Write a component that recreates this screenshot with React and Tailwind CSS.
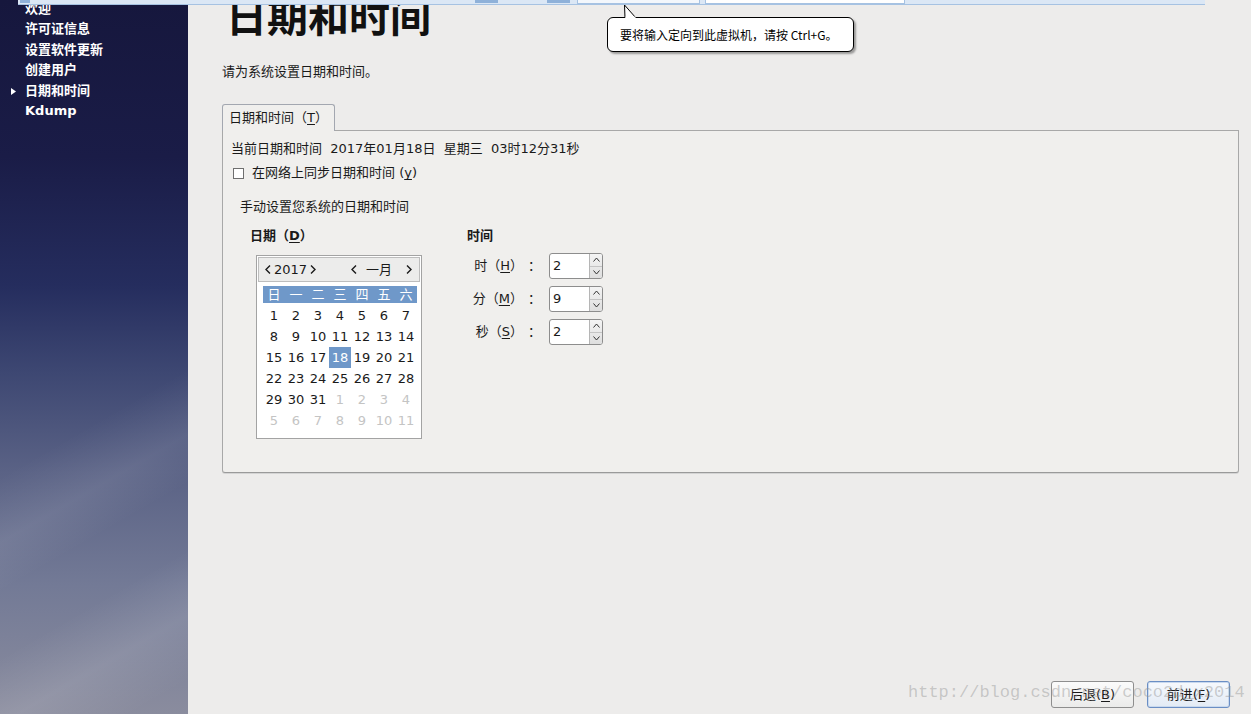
import React from 'react'

const ui = { fontFamily: '"DejaVu Sans","Noto Sans CJK SC",sans-serif' }

const sideItems = ['欢迎', '许可证信息', '设置软件更新', '创建用户', '日期和时间', 'Kdump']

const weekDays = ['日', '一', '二', '三', '四', '五', '六']

const days = [
    ...Array.from({ length: 31 }, (_, i) => ({ n: i + 1, cur: true })),
    ...Array.from({ length: 11 }, (_, i) => ({ n: i + 1, cur: false })),
]

const Chevron = ({ left }) => (
    <svg width='6' height='9' viewBox='0 0 6 9'>
        <path d={left ? 'M5 0.5 L1 4.5 L5 8.5' : 'M1 0.5 L5 4.5 L1 8.5'} fill='none' stroke='#1a1a1a' strokeWidth='1.4' />
    </svg>
)

const Spin = ({ value }) => {
    return (
        <div className='flex h-[26px] w-[54px] rounded-[3px] border border-[#8d8d8d] bg-white overflow-hidden'>
            <div className='flex-1 pl-[3px] text-[13px] leading-[24px] text-[#1a1a1a]'>{value}</div>
            <div className='flex w-[13px] flex-col border-l border-[#b5b5b5] bg-[linear-gradient(#f4f4f4,#dedede)]'>
                <div className='flex flex-1 items-center justify-center border-b border-[#c4c4c4]'>
                    <svg width='7' height='5' viewBox='0 0 7 5'><path d='M0.5 4.5 L3.5 1 L6.5 4.5' fill='none' stroke='#333' strokeWidth='1' /></svg>
                </div>
                <div className='flex flex-1 items-center justify-center'>
                    <svg width='7' height='5' viewBox='0 0 7 5'><path d='M0.5 0.5 L3.5 4 L6.5 0.5' fill='none' stroke='#333' strokeWidth='1' /></svg>
                </div>
            </div>
        </div>
    )
}

const TimeRow = ({ ch, key1, value }) => {
    return (
        <div className='flex h-[26px] items-center'>
            <div className='w-[56px] text-right text-[13px] text-[#1a1a1a]'>
                {ch}（<u className='underline-offset-2'>{key1}</u>）
            </div>
            <div className='w-[26px] pl-[5px] text-[13px] text-[#1a1a1a]'>：</div>
            <Spin value={value} />
        </div>
    )
}

const Calendar = () => {
    return (
        <div className='ml-[6px] mt-[10px] h-[184px] w-[166px] border border-[#a3a3a3] bg-white p-[1px]'>
            <div className='flex h-[25px] items-center border border-[#bdbdbd] bg-[#ececeb] text-[13px] text-[#1a1a1a]'>
                <span className='ml-[6px] flex'><Chevron left /></span>
                <span className='ml-[3px]'>2017</span>
                <span className='ml-[3px] flex'><Chevron /></span>
                <span className='ml-[35px] flex'><Chevron left /></span>
                <span className='ml-[9px]'>一月</span>
                <span className='ml-[14px] flex'><Chevron /></span>
            </div>
            <div className='ml-[5px] mt-[4px] grid w-[154px] grid-cols-[repeat(7,22px)] bg-[#6f98c9] text-[13px] leading-[17px] text-white'>
                {weekDays.map(d => <div key={d} className='text-center'>{d}</div>)}
            </div>
            <div className='ml-[5px] mt-[2px] grid w-[154px] grid-cols-[repeat(7,22px)] text-[13px] leading-[21px]'>
                {days.map((d, i) => (
                    <div
                        key={i}
                        className={d.cur && d.n === 18
                            ? 'bg-[#6f98c9] text-center text-white'
                            : d.cur ? 'text-center text-[#1a1a1a]' : 'text-center text-[#c4c4c4]'}
                    >
                        {d.n}
                    </div>
                ))}
            </div>
        </div>
    )
}

const App = () => {
    return (
        <div className='relative flex h-[714px] w-[1251px] overflow-hidden' style={ui}>
            {/* sidebar */}
            <div className='relative w-[188px] shrink-0 bg-[linear-gradient(180deg,#16173d_0%,#1a1c47_22%,#252d5e_40%,#3d4772_52%,#5a6285_66%,#737a96_82%,#8a8c9e_100%)]'>
                <div className='absolute inset-0 bg-[linear-gradient(150deg,transparent_58%,rgba(255,255,255,0.08)_66%,transparent_72%,transparent_80%,rgba(255,255,255,0.1)_88%,transparent_96%)]' />
                <div className='relative -mt-[1px] flex flex-col'>
                    {sideItems.map((item, i) => (
                        <div key={item} className='relative h-[20.4px] pl-[25px] text-[13px] font-bold leading-[20.4px] text-white'>
                            {i === 4 && (
                                <svg className='absolute left-[11px] top-[7px]' width='5' height='7' viewBox='0 0 5 7'><path d='M0 0 L5 3.5 L0 7 Z' fill='#fff' /></svg>
                            )}
                            {item}
                        </div>
                    ))}
                </div>
            </div>

            {/* main */}
            <div className='relative flex flex-1 flex-col bg-[#edeceb] pl-[34px] pr-[12px]'>
                <h1 className='-mt-[3px] h-[42px] pl-[4px] text-[41px] font-bold leading-[42px] text-[#111]'>日期和时间</h1>
                <p className='mt-[24px] text-[13px] leading-[18px] text-[#1a1a1a]'>请为系统设置日期和时间。</p>

                <div className='relative z-10 -mb-[1px] mt-[23px] flex h-[27px] w-[113px] items-center rounded-t-[3px] border border-b-0 border-[#a3a7b0] bg-[#f0efed] pl-[6px] text-[13px] text-[#1a1a1a]'>
                    日期和时间（<u className='underline-offset-2'>T</u>）
                </div>
                <div className='h-[343px] rounded-b-[3px] border border-[#a8a8a8] border-b-[#9a9a9a] bg-[#f0efed] pl-[8px] pt-[9px] text-[13px] text-[#1a1a1a] shadow-[0_1px_0_#d4d4d4]'>
                    <div className='whitespace-pre leading-[18px]'>当前日期和时间  2017年01月18日  星期三  03时12分31秒</div>
                    <div className='mt-[6px] flex h-[18px] items-center'>
                        <div className='ml-[2px] h-[11px] w-[11px] border border-[#6f6f6f] bg-white' />
                        <span className='ml-[8px]'>在网络上同步日期和时间 (<u className='underline-offset-2'>y</u>)</span>
                    </div>
                    <div className='ml-[9px] mt-[16px] leading-[18px]'>手动设置您系统的日期和时间</div>

                    <div className='mt-[11px] flex'>
                        <div className='ml-[19px] w-[217px]'>
                            <div className='font-bold leading-[18px]'>日期（<u className='underline-offset-2'>D</u>）</div>
                            <Calendar />
                        </div>
                        <div className='flex flex-col'>
                            <div className='font-bold leading-[18px]'>时间</div>
                            <div className='mt-[8px] flex flex-col gap-[7px]'>
                                <TimeRow ch='时' key1='H' value='2' />
                                <TimeRow ch='分' key1='M' value='9' />
                                <TimeRow ch='秒' key1='S' value='2' />
                            </div>
                        </div>
                    </div>
                </div>

                <div className='mt-auto mb-[6px] mr-[9px] flex justify-end gap-[13px]'>
                    <button className='h-[27px] w-[83px] rounded-[3px] border border-[#8e8e8e] bg-[linear-gradient(#fbfbfb,#ebebea)] text-[13px] text-[#1a1a1a]'>
                        后退(<u className='underline-offset-2'>B</u>)
                    </button>
                    <button className='h-[27px] w-[83px] rounded-[3px] border border-[#6a8ec4] bg-[linear-gradient(#f6f9fd,#e3ebf5)] text-[13px] text-[#1a1a1a] shadow-[inset_0_0_0_1px_#c9d9ee]'>
                        前进(<u className='underline-offset-2'>F</u>)
                    </button>
                </div>
            </div>

            {/* VM toolbar strip */}
            <div className='absolute left-[18px] top-0 flex h-[5px] w-[1187px] items-start border-b border-[#a6c2e2] bg-[#dbe7f5]'>
                <div className='ml-[2px] h-[3px] w-[10px] bg-[#8fb1d9]' />
                <div className='ml-[445px] h-[3px] w-[23px] bg-[#8fb1d9]' />
                <div className='ml-[49px] h-[3px] w-[23px] bg-[#8fb1d9]' />
                <div className='ml-[7px] h-[4px] w-[123px] border border-t-0 border-[#a6c2e2] bg-[#f3f7fc]' />
                <div className='ml-[5px] h-[4px] w-[200px] border border-t-0 border-[#a6c2e2] bg-white' />
            </div>

            {/* tooltip */}
            <div className='absolute left-[607px] top-[17px] h-[35px] w-[247px] rounded-[6px] border border-black bg-white shadow-[2px_2px_2px_rgba(0,0,0,0.35)]'>
                <div className='pl-[12px] pt-[8px] text-[12px] leading-[17px] text-black' style={{ fontFamily: '"Noto Sans CJK SC","DejaVu Sans",sans-serif' }}>
                    要将输入定向到此虚拟机，请按 Ctrl+G。
                </div>
            </div>
            <svg className='absolute left-[622px] top-[4px]' width='16' height='16' viewBox='0 0 16 16'>
                <path d='M3 14 L2.5 1 L14 14' fill='#fff' stroke='#000' strokeWidth='1' />
                <rect x='3.5' y='12.6' width='10' height='3' fill='#fff' />
            </svg>

            {/* watermark */}
            <div className='pointer-events-none absolute left-[908px] top-[681px] whitespace-pre text-[17px] leading-[24px] text-[rgba(150,150,150,0.45)]' style={{ fontFamily: '"Liberation Mono",monospace' }}>
                http://blog.csdn.net/coco2d_x2014
            </div>
        </div>
    )
}

export default App
